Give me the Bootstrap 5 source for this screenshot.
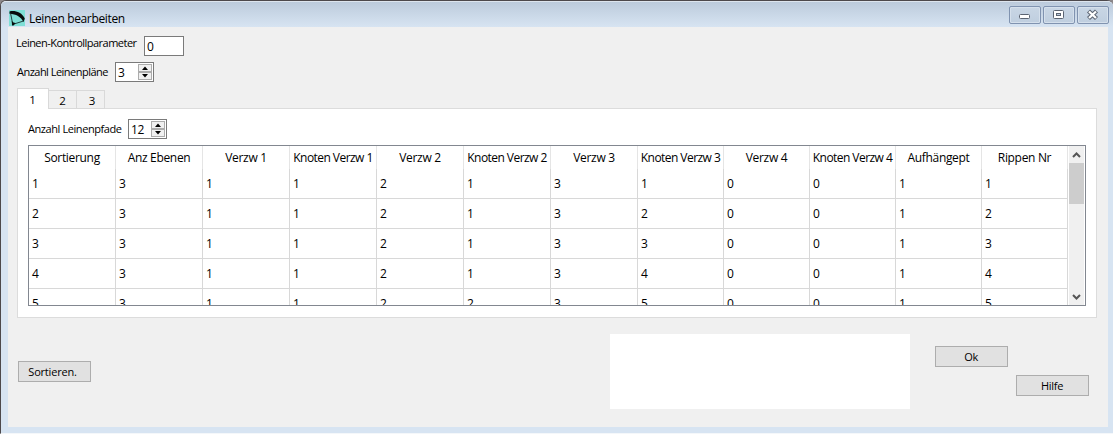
<!DOCTYPE html>
<html lang="de">
<head>
<meta charset="utf-8">
<title>Leinen bearbeiten</title>
<link href="https://cdn.jsdelivr.net/npm/bootstrap@5.3.0/dist/css/bootstrap.min.css" rel="stylesheet">
<style>
body{width:1113px;height:434px;overflow:hidden;background:#8d888b;font:12px/16px "Open Sans","Noto Sans",sans-serif;color:#000}
.win{height:434px;background:#d7e4f2;border-left:1px solid #4d494c;border-top:1px solid #4d494c;border-radius:6px 6px 0 0;padding:0 5px 6px 7px;border-bottom:1px solid #f4f7fa}
.titlebar{height:26px;margin:0 -5px 0 -7px;padding:0 4px 0 8px;border-radius:5px 5px 0 0;background:linear-gradient(#bccbdc,#d7e4f2);border-top:1px solid #dde5ee}
.cap{font-size:12px;letter-spacing:-.35px;margin:9px 0 0 4px}
.wbtn{width:32px;height:18px;margin-top:4px;border:1px solid #8093b0;border-radius:2px;background:linear-gradient(#c9d6e5,#bfcedf);padding:0;box-shadow:inset 0 0 0 1px #d5e0ec}
.client{height:400px;background:#f0f0f0;padding:9px 11px 0 9px}
.lbl{font-size:11px;letter-spacing:-.52px;white-space:nowrap;line-height:14px}
.fld{background:#fff;border:1px solid #7a7a7a;height:20px;line-height:20px;padding-left:2px;letter-spacing:-.3px}
.spin{width:39px}
.spin-b{width:14px;margin:1px 1px 1px 0}
.spin-b i{display:flex;height:8px;border:1px solid #acacac;background:#f0f0f0;align-items:center;justify-content:center}
.tabrow{height:21px;margin-bottom:-1px}
.tb{border:1px solid #d9d9d9;background:#f0f0f0;width:29px;height:19px;line-height:19px;text-align:center;margin-left:-1px;font-size:11.5px}
.tb.on{width:32px;height:21px;line-height:22px;background:#fff;border-bottom:0;margin-left:0;padding-right:1px}
.pane{width:1080px;height:210px;background:#fff;border:1px solid #dcdcdc;padding:10px}
.gridbox{width:1058px;height:161px;border:1px solid #828790;overflow:hidden;margin-top:6px}
.tg{table-layout:fixed;width:1039px;border-collapse:separate;border-spacing:0;flex:none}
.tg th{height:23px;padding:1px 0 0;font-weight:400;text-align:center;border-right:1px solid #e5e5e5;white-space:nowrap;overflow:hidden;letter-spacing:-.32px}
.tg th.kn{letter-spacing:-.55px}
.tg td{height:30px;padding:0 0 0 3px;border-right:1px solid #d8d8d8;border-bottom:1px solid #d8d8d8}
.sb{width:15px;height:159px;background:#f0f0f0;margin-left:1px}
.thumb{height:41px;background:#cdcdcd}
.pb{width:73px;height:21px;border:1px solid #adadad;background:#e1e1e1;font-size:11px;line-height:20px;letter-spacing:-.3px;text-align:center;padding:0 1px 0 0;color:#000}
.note{width:300px;height:75px;background:#fff}
</style>
</head>
<body>
<div class="win">
  <div class="titlebar d-flex align-items-start">
    <svg class="mt-2" width="16" height="16" viewBox="0 0 16 16"><rect width="16" height="16" fill="#7fdfd6"/><path d="M.5 1.500C5 0 13 2 15.800 8.500L14.500 12C12 7 7 4 .5 3.800z" fill="#080c0c"/><path d="M1.500 3L3.500 13M14.500 11L5 14" stroke="#16302f" stroke-width=".9" fill="none"/><path d="M2.800 11l1.700 1.500L6.500 13l-2 2.500H3z" fill="#080c0c"/></svg>
    <span class="cap">Leinen bearbeiten</span>
    <div class="d-flex ms-auto" style="gap:2px">
      <button class="wbtn d-flex"><svg width="30" height="16"><rect x="9.500" y="7.500" width="10" height="4" rx="1" fill="#fff" stroke="#5b6472"/></svg></button>
      <button class="wbtn d-flex"><svg width="30" height="16"><rect x="9.500" y="3.500" width="10" height="8" rx="1" fill="#fff" stroke="#5b6472"/><rect x="12.500" y="6.500" width="4" height="2" fill="#bccbdd" stroke="#5b6472"/></svg></button>
      <button class="wbtn d-flex"><svg width="30" height="16"><path d="M10.500 4l8 7.500M18.500 4l-8 7.500" stroke="#5b6472" stroke-width="4.400"/><path d="M11 4.500l7 6.500M18 4.500l-7 6.500" stroke="#fff" stroke-width="2.300"/></svg></button>
    </div>
  </div>
  <div class="client">
    <div class="d-flex">
      <span class="lbl" style="width:128px;margin-left:-1px">Leinen-Kontrollparameter</span>
      <div class="fld" style="width:40px">0</div>
    </div>
    <div class="d-flex" style="margin-top:6px">
      <span class="lbl" style="width:98px;padding-top:3px">Anzahl Leinenpläne</span>
      <div class="fld spin d-flex justify-content-between"><span>3</span><div class="spin-b"><i><svg width="6" height="4"><path d="M0 4h6L3 .5z"/></svg></i><i><svg width="6" height="4"><path d="M0 0h6L3 3.500z"/></svg></i></div></div>
    </div>
    <div class="tabrow d-flex align-items-end position-relative" style="margin-top:6px">
      <div class="tb on">1</div><div class="tb">2</div><div class="tb" style="padding-left:3px">3</div>
    </div>
    <div class="pane">
      <div class="d-flex">
        <span class="lbl" style="width:100px;padding-top:3px;letter-spacing:-.42px">Anzahl Leinenpfade</span>
        <div class="fld spin d-flex justify-content-between"><span>12</span><div class="spin-b"><i><svg width="6" height="4"><path d="M0 4h6L3 .5z"/></svg></i><i><svg width="6" height="4"><path d="M0 0h6L3 3.500z"/></svg></i></div></div>
      </div>
      <div class="gridbox d-flex align-items-start">
        <table class="tg">
          <colgroup><col span="7" style="width:87px"><col span="5" style="width:86px"></colgroup>
          <thead><tr><th>Sortierung</th><th>Anz Ebenen</th><th>Verzw 1</th><th class="kn">Knoten Verzw 1</th><th>Verzw 2</th><th class="kn">Knoten Verzw 2</th><th>Verzw 3</th><th class="kn">Knoten Verzw 3</th><th>Verzw 4</th><th class="kn">Knoten Verzw 4</th><th>Aufhängept</th><th>Rippen Nr</th></tr></thead>
          <tbody>
          <tr><td>1</td><td>3</td><td>1</td><td>1</td><td>2</td><td>1</td><td>3</td><td>1</td><td>0</td><td>0</td><td>1</td><td>1</td></tr>
          <tr><td>2</td><td>3</td><td>1</td><td>1</td><td>2</td><td>1</td><td>3</td><td>2</td><td>0</td><td>0</td><td>1</td><td>2</td></tr>
          <tr><td>3</td><td>3</td><td>1</td><td>1</td><td>2</td><td>1</td><td>3</td><td>3</td><td>0</td><td>0</td><td>1</td><td>3</td></tr>
          <tr><td>4</td><td>3</td><td>1</td><td>1</td><td>2</td><td>1</td><td>3</td><td>4</td><td>0</td><td>0</td><td>1</td><td>4</td></tr>
          <tr><td>5</td><td>3</td><td>1</td><td>1</td><td>2</td><td>2</td><td>3</td><td>5</td><td>0</td><td>0</td><td>1</td><td>5</td></tr>
          </tbody>
        </table>
        <div class="sb d-flex flex-column">
          <svg width="15" height="17"><path d="M4 11l3.500-3.500L11 11" fill="none" stroke="#555" stroke-width="2"/></svg>
          <div class="thumb"></div>
          <svg class="mt-auto" width="15" height="17"><path d="M4 7l3.500 3.500L11 7" fill="none" stroke="#555" stroke-width="2"/></svg>
        </div>
      </div>
    </div>
    <div class="d-flex align-items-start" style="padding:16px 0 0 1px">
      <button class="pb" style="margin-top:27px;padding-right:4px;letter-spacing:-.2px">Sortieren.</button>
      <div class="note" style="margin-left:519px"></div>
      <button class="pb" style="margin:12px 0 0 25px">Ok</button>
      <button class="pb" style="margin:41px 0 0 8px">Hilfe</button>
    </div>
  </div>
</div>
<script src="https://cdn.jsdelivr.net/npm/bootstrap@5.3.0/dist/js/bootstrap.bundle.min.js"></script>
</body>
</html>
